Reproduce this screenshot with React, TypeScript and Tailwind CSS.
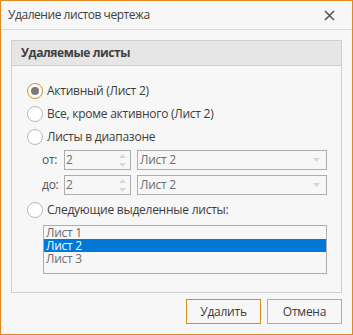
import React from "react";

const Radio: React.FC<{ checked?: boolean }> = ({ checked }) => (
  <span
    className={`flex h-[16px] w-[16px] shrink-0 items-center justify-center rounded-full border bg-white ${
      checked ? "border-[#e0891f]" : "border-[#b9b9b9]"
    }`}
  >
    {checked && <span className="h-[8px] w-[8px] rounded-full bg-[#7a7a7a]" />}
  </span>
);

const Spinner: React.FC<{ value: string }> = ({ value }) => (
  <div className="flex h-[20px] w-[67px] items-center justify-between border border-[#adadad] bg-[#f7f7f7] pl-[1px] pr-[4px]">
    <span className="text-[#6d6d6d]">{value}</span>
    <div className="flex flex-col gap-[5px]">
      <svg width="7" height="4" viewBox="0 0 7 4"><path d="M0 4 L3.5 0 L7 4 Z" fill="#d6d6d6" /></svg>
      <svg width="7" height="4" viewBox="0 0 7 4"><path d="M0 0 L3.5 4 L7 0 Z" fill="#d6d6d6" /></svg>
    </div>
  </div>
);

const Select: React.FC<{ value: string }> = ({ value }) => (
  <div className="flex h-[20px] w-[190px] items-center justify-between border border-[#adadad] bg-[#f7f7f7] pl-[2px] pr-[6px]">
    <span className="text-[#6d6d6d]">{value}</span>
    <svg width="7" height="4" viewBox="0 0 7 4"><path d="M0 0 L3.5 4 L7 0 Z" fill="#d6d6d6" /></svg>
  </div>
);

const App: React.FC = () => {
  const sheets = ["Лист 1", "Лист 2", "Лист 3"];
  return (
    <div
      className="flex h-[335px] w-[353px] flex-col border border-[#e0891f] bg-[#f7f7f7] text-[12px] tracking-[-0.25px] text-[#3c3c3c]"
      style={{ fontFamily: '"Open Sans", "DejaVu Sans", sans-serif' }}
    >
      <div className="flex h-[29px] shrink-0 items-center justify-between border-b border-[#d9d9d9] pl-[7px] pr-[17px]">
        <span className="text-[12px] tracking-[-0.45px] text-[#404040]">Удаление листов чертежа</span>
        <svg width="11" height="11" viewBox="0 0 11 11">
          <path d="M1 1 L10 10 M10 1 L1 10" stroke="#555" strokeWidth="1.6" />
        </svg>
      </div>

      <div className="ml-[10px] mt-[10px] flex h-[253px] w-[331px] flex-col border border-[#d0d0d0]">
        <div className="flex h-[25px] shrink-0 items-center border-b border-[#d0d0d0] bg-[#e6e6e6] pl-[9px] text-[12px] font-bold tracking-[-0.4px] text-[#404040]">
          Удаляемые листы
        </div>
        <div className="flex flex-col pl-[15px] pt-[13px]">
          <div className="flex h-[23px] items-center gap-[4px]">
            <Radio checked />
            <span>Активный (Лист 2)</span>
          </div>
          <div className="flex h-[23px] items-center gap-[4px]">
            <Radio />
            <span>Все, кроме активного (Лист 2)</span>
          </div>
          <div className="flex h-[23px] items-center gap-[4px]">
            <Radio />
            <span>Листы в диапазоне</span>
          </div>
          <div className="mt-[2px] flex items-center pl-[15px]">
            <span className="w-[22px] text-[#555]">от:</span>
            <Spinner value="2" />
            <div className="w-[6px]" />
            <Select value="Лист 2" />
          </div>
          <div className="mt-[5px] flex items-center pl-[15px]">
            <span className="w-[22px] text-[#555]">до:</span>
            <Spinner value="2" />
            <div className="w-[6px]" />
            <Select value="Лист 2" />
          </div>
          <div className="mt-[3px] flex h-[23px] items-center gap-[4px]">
            <Radio />
            <span>Следующие выделенные листы:</span>
          </div>
          <div className="ml-[16px] mt-[4px] flex h-[49px] w-[284px] flex-col border border-[#adadad] bg-[#f7f7f7]">
            {sheets.map(s => (
              <div
                key={s}
                className={`h-[13px] overflow-hidden pl-[2px] text-[12px] leading-[13px] ${
                  s === "Лист 2" ? "bg-[#0078d7] text-white" : "text-[#6d6d6d]"
                }`}
              >
                {s}
              </div>
            ))}
          </div>
        </div>
      </div>

      <div className="ml-[185px] mt-[6px] flex gap-[6px]">
        <button className="h-[25px] w-[75px] border border-[#e0891f] bg-[#f7f7f7] text-[#3c3c3c]">Удалить</button>
        <button className="h-[25px] w-[75px] border border-[#adadad] bg-[#f7f7f7] text-[#3c3c3c]">Отмена</button>
      </div>
    </div>
  );
};

export default App;
